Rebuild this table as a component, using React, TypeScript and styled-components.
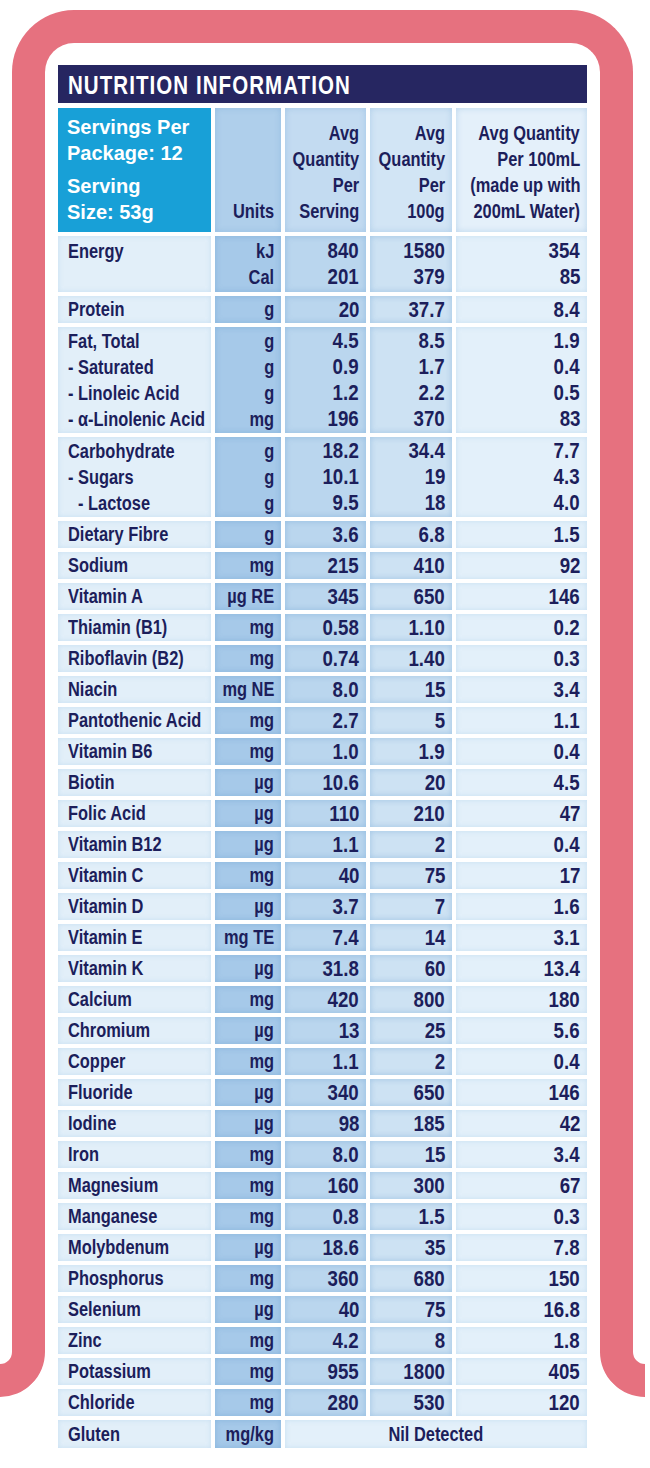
import React from "react";
import styled, { createGlobalStyle, css } from "styled-components";

const GlobalStyle = createGlobalStyle`
  html, body { margin: 0; padding: 0; background: #ffffff; overflow: hidden; }
  *, *::before, *::after { box-sizing: border-box; }
`;

const NAVY_TEXT = "#1c1e5b";
const PINK = "#e6717f";
const FONT = `"Liberation Sans", Arial, sans-serif`;

type Align = "left" | "right" | "center";

const justify: Record<Align, string> = {
  left: "flex-start",
  right: "flex-end",
  center: "center",
};

const Page = styled.div`
  position: relative;
  width: 650px;
  min-height: 1468px;
  overflow: hidden;
  padding: 65px 63px 0 58px;
  background: #ffffff;
`;

const Frame = styled.div`
  position: absolute;
  left: 12px;
  top: 10px;
  width: 621px;
  height: 1342px;
  border: 33px solid ${PINK};
  border-bottom: none;
  border-radius: 62px 62px 0 0;
  pointer-events: none;

  &::before,
  &::after {
    content: "";
    position: absolute;
    bottom: -45px;
    width: 90px;
    height: 90px;
    border-radius: 50%;
    border: 33px solid transparent;
    border-bottom-color: ${PINK};
  }
  &::before {
    left: -90px;
    transform: rotate(-45deg);
  }
  &::after {
    right: -90px;
    transform: rotate(45deg);
  }
`;

const Table = styled.section`
  position: relative;
  width: 529px;
  color: ${NAVY_TEXT};
  font-family: ${FONT};
  font-weight: 700;
  font-size: 20px;
`;

const TitleBar = styled.h1`
  margin: 0 0 5px 0;
  height: 38px;
  line-height: 40px;
  padding-left: 10px;
  background: #262661;
  color: #ffffff;
  font-family: ${FONT};
  font-weight: 700;
  font-size: 25px;
  display: flex;
`;

const Squeeze = styled.span<{ $origin: Align; $scale?: number; $spacing?: number }>`
  display: inline-block;
  flex-shrink: 0;
  white-space: nowrap;
  transform: scaleX(${(p) => p.$scale ?? 0.82});
  transform-origin: ${(p) => p.$origin} center;
  letter-spacing: ${(p) => p.$spacing ?? 0}px;
`;

const Grid = styled.div`
  display: grid;
  grid-template-columns: 153px 66px 81px 82px 131px;
  gap: 4px;
`;

type Tone = "name" | "units" | "serve" | "hundred" | "made";

const tones: Record<Tone, string> = {
  name: "#e2eff9",
  units: "#a6c9e9",
  serve: "#bad6ee",
  hundred: "#cde2f3",
  made: "#e3f0fa",
};

const headTones: Record<Tone, string> = {
  name: "#e2eff9",
  units: "#afcfeb",
  serve: "#c3dbf1",
  hundred: "#d2e5f5",
  made: "#e4f0fa",
};

const Cell = styled.div<{ $tone: Tone; $h: number; $align: Align; $span?: number }>`
  height: ${(p) => p.$h}px;
  background: ${(p) => tones[p.$tone]};
  box-shadow: ${(p) =>
    p.$tone === "name" || p.$tone === "made"
      ? "inset 0 0 5px rgba(150, 195, 230, 0.35)"
      : "inset 0 0 6px rgba(90, 150, 205, 0.4)"};
  display: flex;
  flex-direction: column;
  justify-content: center;
  ${(p) =>
    p.$align === "left"
      ? css`padding: 0 0 0 10px;`
      : p.$align === "center"
      ? css`padding: 0;`
      : css`padding: 0 7px 0 0;`}
  ${(p) => p.$span && css`grid-column: span ${p.$span};`}
`;

const Line = styled.div<{ $single?: boolean; $num?: boolean; $indent?: number; $align: Align }>`
  display: flex;
  justify-content: ${(p) => justify[p.$align]};
  line-height: ${(p) => (p.$single ? "27px" : "26px")};
  height: ${(p) => (p.$single ? "27px" : "26px")};
  font-size: ${(p) => (p.$num ? "22px" : "20px")};
  padding-left: ${(p) => p.$indent ?? 0}px;
`;

const HeadCell = styled.div<{ $tone: Tone }>`
  height: 124px;
  background: ${(p) => headTones[p.$tone]};
  box-shadow: inset 0 0 6px rgba(90, 150, 205, 0.3);
  display: flex;
  flex-direction: column;
  justify-content: flex-end;
  padding: 0 7px 8px 0;
`;

const CyanCell = styled.div`
  height: 124px;
  background: #18a0d7;
  color: #ffffff;
  font-size: 20px;
  padding: 6px 0 0 9px;
  display: flex;
  flex-direction: column;
  gap: 7px;
`;

const HeadLine = styled.div<{ $align: Align }>`
  display: flex;
  justify-content: ${(p) => justify[p.$align]};
  line-height: 26px;
  height: 26px;
  white-space: nowrap;
`;

type Row = {
  names: string[];
  units: string[];
  a: string[];
  b: string[];
  c: string[];
  h?: number;
};

const single = (n: string, u: string, a: string, b: string, c: string): Row => ({
  names: [n],
  units: [u],
  a: [a],
  b: [b],
  c: [c],
});

const rows: Row[] = [
  { names: ["Energy", ""], units: ["kJ", "Cal"], a: ["840", "201"], b: ["1580", "379"], c: ["354", "85"], h: 56 },
  single("Protein", "g", "20", "37.7", "8.4"),
  {
    names: ["Fat, Total", "- Saturated", "- Linoleic Acid", "- α-Linolenic Acid"],
    units: ["g", "g", "g", "mg"],
    a: ["4.5", "0.9", "1.2", "196"],
    b: ["8.5", "1.7", "2.2", "370"],
    c: ["1.9", "0.4", "0.5", "83"],
    h: 106,
  },
  {
    names: ["Carbohydrate", "- Sugars", ">- Lactose"],
    units: ["g", "g", "g"],
    a: ["18.2", "10.1", "9.5"],
    b: ["34.4", "19", "18"],
    c: ["7.7", "4.3", "4.0"],
    h: 80,
  },
  single("Dietary Fibre", "g", "3.6", "6.8", "1.5"),
  single("Sodium", "mg", "215", "410", "92"),
  single("Vitamin A", "µg RE", "345", "650", "146"),
  single("Thiamin (B1)", "mg", "0.58", "1.10", "0.2"),
  single("Riboflavin (B2)", "mg", "0.74", "1.40", "0.3"),
  single("Niacin", "mg NE", "8.0", "15", "3.4"),
  single("Pantothenic Acid", "mg", "2.7", "5", "1.1"),
  single("Vitamin B6", "mg", "1.0", "1.9", "0.4"),
  single("Biotin", "µg", "10.6", "20", "4.5"),
  single("Folic Acid", "µg", "110", "210", "47"),
  single("Vitamin B12", "µg", "1.1", "2", "0.4"),
  single("Vitamin C", "mg", "40", "75", "17"),
  single("Vitamin D", "µg", "3.7", "7", "1.6"),
  single("Vitamin E", "mg TE", "7.4", "14", "3.1"),
  single("Vitamin K", "µg", "31.8", "60", "13.4"),
  single("Calcium", "mg", "420", "800", "180"),
  single("Chromium", "µg", "13", "25", "5.6"),
  single("Copper", "mg", "1.1", "2", "0.4"),
  single("Fluoride", "µg", "340", "650", "146"),
  single("Iodine", "µg", "98", "185", "42"),
  single("Iron", "mg", "8.0", "15", "3.4"),
  single("Magnesium", "mg", "160", "300", "67"),
  single("Manganese", "mg", "0.8", "1.5", "0.3"),
  single("Molybdenum", "µg", "18.6", "35", "7.8"),
  single("Phosphorus", "mg", "360", "680", "150"),
  single("Selenium", "µg", "40", "75", "16.8"),
  single("Zinc", "mg", "4.2", "8", "1.8"),
  single("Potassium", "mg", "955", "1800", "405"),
  single("Chloride", "mg", "280", "530", "120"),
];

const Lines: React.FC<{ items: string[]; num?: boolean; align: Align }> = ({ items, num, align }) => {
  const isSingle = items.length === 1;
  return (
    <>
      {items.map((t, i) => {
        const indent = t.startsWith(">") ? 10 : 0;
        const text = t.startsWith(">") ? t.slice(1) : t;
        return (
          <Line key={i} $single={isSingle} $num={num} $indent={indent} $align={align}>
            <Squeeze $origin={align} $scale={num ? 0.85 : 0.82}>
              {text || "\u00a0"}
            </Squeeze>
          </Line>
        );
      })}
    </>
  );
};

const HeadText: React.FC<{ lines: string[] }> = ({ lines }) => (
  <>
    {lines.map((l) => (
      <HeadLine key={l} $align="right">
        <Squeeze $origin="right">{l}</Squeeze>
      </HeadLine>
    ))}
  </>
);

export default function App() {
  return (
    <>
      <GlobalStyle />
      <Page>
        <Frame />
        <Table>
          <TitleBar>
            <Squeeze $origin="left" $spacing={1.3}>
              NUTRITION INFORMATION
            </Squeeze>
          </TitleBar>
          <Grid>
            <CyanCell>
              <div>
                <HeadLine $align="left">Servings Per</HeadLine>
                <HeadLine $align="left">Package: 12</HeadLine>
              </div>
              <div>
                <HeadLine $align="left">Serving</HeadLine>
                <HeadLine $align="left">Size: 53g</HeadLine>
              </div>
            </CyanCell>
            <HeadCell $tone="units">
              <HeadText lines={["Units"]} />
            </HeadCell>
            <HeadCell $tone="serve">
              <HeadText lines={["Avg", "Quantity", "Per", "Serving"]} />
            </HeadCell>
            <HeadCell $tone="hundred">
              <HeadText lines={["Avg", "Quantity", "Per", "100g"]} />
            </HeadCell>
            <HeadCell $tone="made">
              <HeadText lines={["Avg Quantity", "Per 100mL", "(made up with", "200mL Water)"]} />
            </HeadCell>

            {rows.map((r, i) => {
              const h = r.h ?? 27;
              return (
                <React.Fragment key={i}>
                  <Cell $tone="name" $h={h} $align="left">
                    <Lines items={r.names} align="left" />
                  </Cell>
                  <Cell $tone="units" $h={h} $align="right">
                    <Lines items={r.units} align="right" />
                  </Cell>
                  <Cell $tone="serve" $h={h} $align="right">
                    <Lines items={r.a} num align="right" />
                  </Cell>
                  <Cell $tone="hundred" $h={h} $align="right">
                    <Lines items={r.b} num align="right" />
                  </Cell>
                  <Cell $tone="made" $h={h} $align="right">
                    <Lines items={r.c} num align="right" />
                  </Cell>
                </React.Fragment>
              );
            })}

            <Cell $tone="name" $h={28} $align="left">
              <Lines items={["Gluten"]} align="left" />
            </Cell>
            <Cell $tone="units" $h={28} $align="right">
              <Lines items={["mg/kg"]} align="right" />
            </Cell>
            <Cell $tone="made" $h={28} $align="center" $span={3}>
              <Lines items={["Nil Detected"]} align="center" />
            </Cell>
          </Grid>
        </Table>
      </Page>
    </>
  );
}
